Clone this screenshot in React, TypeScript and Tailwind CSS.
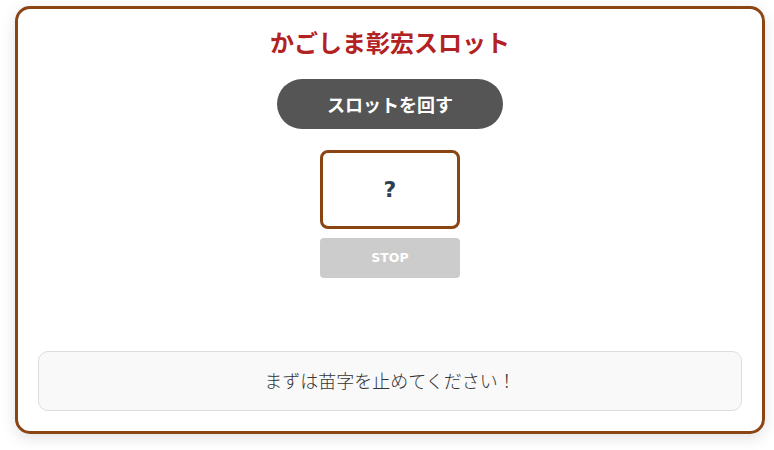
import React from "react";

export default function App() {
  return (
    <div
      className="min-h-[450px] w-[774px] bg-white pl-[15px] pt-[6px]"
      style={{ fontFamily: '"Noto Sans CJK JP", "Noto Sans", sans-serif' }}
    >
      <div className="flex h-[428px] w-[750px] flex-col items-center rounded-[15px] border-[3px] border-[#8b4513] bg-white px-[20px] pb-[20px] pt-[18px] shadow-[0_4px_15px_rgba(0,0,0,0.12)]">
        <h1 className="text-center text-[24px] font-bold leading-[29px] text-[#b22222]">
          かごしま彰宏スロット
        </h1>
        <button className="mt-[23px] h-[50px] w-[226px] rounded-full bg-[#555555] text-[18px] font-bold text-white">
          スロットを回す
        </button>
        <div className="mt-[21px] flex h-[79px] w-[140px] items-center justify-center rounded-[8px] border-[3px] border-[#8b4513] bg-white font-['DejaVu_Sans',sans-serif] text-[22px] font-bold text-[#2c3e50]">
          ?
        </div>
        <button className="mt-[9px] h-[40px] w-[140px] rounded-[4px] bg-[#cccccc] font-['DejaVu_Sans',sans-serif] text-[12.5px] font-bold text-white">
          STOP
        </button>
        <div className="mt-auto flex h-[60px] w-full items-center justify-center rounded-[10px] border border-[#dddddd] bg-[#f9f9f9] pb-[2px] text-[18px] font-light text-[#333333]">
          まずは苗字を止めてください！
        </div>
      </div>
    </div>
  );
}
